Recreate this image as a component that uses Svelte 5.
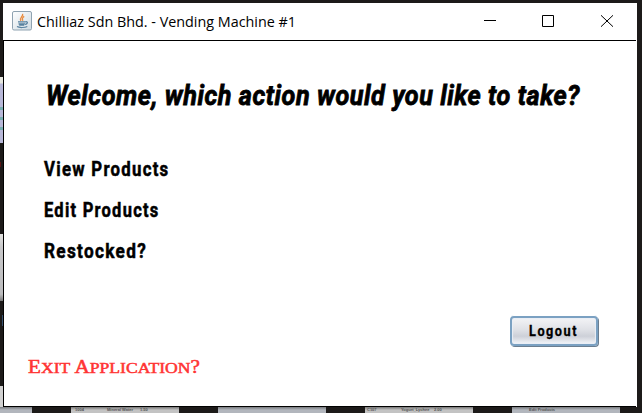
<script>
  const actions = [
    { label: 'View Products', width: 125.5 },
    { label: 'Edit Products', width: 115.5 },
    { label: 'Restocked?', width: 103 }
  ];
  const previews = [
    { x: -76, rows: [] },
    { x: 71, rows: [[4, '1004'], [36, 'Mineral Water'], [69, '1.50']] },
    { x: 218, rows: [] },
    { x: 365, rows: [[2, 'C107'], [36, 'Yogurt_Lychee'], [69, '2.00']] },
    { x: 512, rows: [[17, 'Edit Products']] }
  ];
</script>

<div class="desktop">
  <div class="slice lilac"><i></i><i></i><i></i></div>
  <div class="slice red"></div>
  <div class="slice grey"></div>
  <div class="slice blue"></div>
  <div class="slice low"></div>
  {#each previews as p}
    <div class="preview" class:table={p.rows.length > 1} style="left:{p.x}px">
      {#each p.rows as [x, text]}
        <span style="left:{x}px">{text}</span>
      {/each}
    </div>
  {/each}

  <main class="window">
    <header>
      <svg class="java" width="20" height="20" viewBox="0 0 20 20">
        <defs>
          <linearGradient id="tile" x1="0" y1="0" x2="1" y2="1">
            <stop offset="0" stop-color="#fff" /><stop offset="1" stop-color="#cfdbe2" />
          </linearGradient>
        </defs>
        <rect x=".5" y=".5" width="19" height="18.5" rx="1.5" fill="url(#tile)" stroke="#8fa3b1" />
        <path d="M10.5 2.8C12 5 7 6.5 8.8 9.8M12.2 5.3C9.8 6.8 10.2 7.8 10.8 9.7" fill="none" stroke="#e98a3c" stroke-width="1.4" />
        <path d="M6 10.8h7.5M6.5 12.8h6.5M7.2 14.2h5M13.6 10.8c3-.6 2 2.2-.6 2.7M5 15.6c2 1.3 8 1.2 10.3-.1" fill="none" stroke="#57819f" stroke-width="1.2" />
      </svg>
      <svg class="title" width="272" height="28">
        <text x="1" y="19" textLength="259" lengthAdjust="spacingAndGlyphs">Chilliaz Sdn Bhd. - Vending Machine #1</text>
      </svg>
      <svg class="controls" width="132" height="14" viewBox="0 0 132 14" fill="none" stroke="#000">
        <path d="M1 7.5h12" />
        <path d="M59.5 2.5h11v11h-11z" />
        <path d="M118 2.3l12 11.4M130 2.3L118 13.7" />
      </svg>
    </header>

    <section>
      <svg class="heading" width="570" height="40">
        <text x="2" y="30" textLength="534" lengthAdjust="spacingAndGlyphs">Welcome, which action would you like to take?</text>
      </svg>
      <nav>
        {#each actions as { label, width }}
          <svg width="150" height="28">
            <text x="0" y="21" textLength={width} lengthAdjust="spacingAndGlyphs">{label}</text>
          </svg>
        {/each}
      </nav>
      <button>
        <svg width="52" height="22">
          <text x="1" y="16" textLength="49" lengthAdjust="spacingAndGlyphs">Logout</text>
        </svg>
      </button>
      <svg class="exit" width="190" height="24">
        <text x="0" y="17" textLength="172" lengthAdjust="spacingAndGlyphs">E<tspan class="small">XIT</tspan> A<tspan class="small">PPLICATION</tspan>?</text>
      </svg>
    </section>
  </main>
</div>

<style>
  :global(body) { margin: 0; }
  .desktop {
    position: relative;
    box-sizing: border-box;
    width: 642px;
    height: 413px;
    padding: 3px 5px 6px 3px;
    overflow: hidden;
    background: #1c1a19;
  }
  svg { display: block; flex: none; overflow: visible; }
  .slice { position: absolute; left: 0; width: 3px; }
  .lilac { top: 77px; height: 66px; background: linear-gradient(#e6e7df 0 6px, #b8b8d8 7px); }
  .lilac i { display: block; height: 3px; margin-top: 7px; background: #77aeb0; }
  .lilac i:first-child { margin-top: 30px; }
  .red { top: 162px; width: 1px; height: 5px; background: #5a1414; }
  .grey { top: 234px; height: 67px; background: linear-gradient(#e2e2e0, #c8c8ca 20%, #bcbcbe 90%, #777); }
  .blue { top: 315px; left: 2px; width: 1px; height: 11px; background: #37506e; }
  .low { top: 386px; height: 27px; background: #d1d1d1; }
  .preview {
    position: absolute;
    top: 407px;
    width: 108px;
    height: 6px;
    overflow: hidden;
    background: linear-gradient(#777a7e, #b2b6bd 3px);
    font: bold 4px/4px "Liberation Sans", sans-serif;
    color: #555;
  }
  .preview.table { background: linear-gradient(#777, #c3c3c3 3px); }
  .preview span { position: absolute; top: 1px; white-space: nowrap; }
  .window {
    position: relative;
    display: flex;
    flex-direction: column;
    height: 404px;
    background: #fff;
  }
  header {
    display: flex;
    align-items: flex-start;
    box-sizing: border-box;
    height: 37px;
    padding: 8px 22px 0 9px;
  }
  .title { margin: -3px 0 0 4px; }
  .title text { font: 15px "Open Sans", sans-serif; }
  .controls { margin: 2px 0 0 auto; }
  section {
    display: flex;
    flex-direction: column;
    flex: 1;
    box-sizing: border-box;
    margin-right: 1px;
    padding: 34px 0 0 24px;
    border: solid #000;
    border-width: 1px 0 1px 1px;
  }
  .heading { margin-left: 16px; }
  .heading text { font: italic bold 27px Roboto, sans-serif; letter-spacing: .6px; stroke: #000; stroke-width: .8px; }
  nav { display: flex; flex-direction: column; gap: 13px; margin: 40px 0 0 16px; }
  nav text { font: bold 20px Roboto, sans-serif; letter-spacing: 1.5px; stroke: #000; stroke-width: .5px; }
  button {
    display: flex;
    align-items: center;
    justify-content: center;
    align-self: flex-end;
    box-sizing: border-box;
    width: 88px;
    height: 30px;
    margin: 51px 38px 0 0;
    padding: 0;
    border: 2px solid #7ba1c2;
    border-radius: 4px;
    background: linear-gradient(#f3f3f6, #dfe1e6 45%, #cdd0d8 70%, #f4f6fa);
    box-shadow: inset 0 0 1px 1px #e9eef5, 1px 1px 0 #6b7e90, 0 -1px 0 #fff, 0 -2px 0 -1px #a8c3d9;
  }
  button text { font: bold 15px Roboto, sans-serif; letter-spacing: 1.8px; stroke: #000; stroke-width: .3px; }
  .exit { margin-top: 10px; }
  .exit text { font: 18px "Liberation Serif", serif; fill: #ff3434; stroke: #ff3434; stroke-width: .5px; }
  .exit .small { font-size: 15px; }
</style>
